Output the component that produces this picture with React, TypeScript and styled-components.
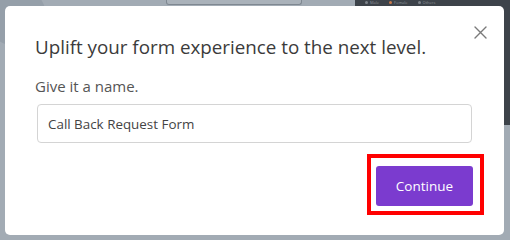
import React from "react";
import styled, { createGlobalStyle } from "styled-components";

const Global = createGlobalStyle`
  html, body { margin: 0; padding: 0; }
  body {
    width: 510px;
    height: 240px;
    overflow: hidden;
    font-family: "Open Sans", "Noto Sans", "Liberation Sans", sans-serif;
  }
  #root { width: 510px; height: 240px; }
`;

const Page = styled.div`
  position: relative;
  width: 510px;
  height: 240px;
  display: grid;
  grid-template-columns: 355px 1fr;
  background: #a2abb4;
  overflow: hidden;
`;

const LeftPane = styled.div`
  display: flex;
  flex-direction: column;
`;

const TopBar = styled.div`
  display: flex;
  align-items: flex-start;
  gap: 120px;
  height: 40px;
`;

const Avatar = styled.div`
  width: 60px;
  height: 60px;
  margin: -14px 0 0 -14px;
  border-radius: 50%;
  background: #959fa9;
`;

const GhostBox = styled.div`
  width: 134px;
  height: 4px;
  border: 1px solid #7f8891;
  border-top: none;
  border-radius: 0 0 3px 3px;
  background: #aab2ba;
`;

const RightPane = styled.div`
  display: flex;
  flex-direction: column;
`;

const DarkPanel = styled.div`
  height: 125px;
  background: #3d434a;
  display: flex;
  gap: 10px;
  padding: 0 0 0 10px;
  align-items: flex-start;
`;

const Legend = styled.span<{ $dot: string }>`
  font-size: 4px;
  color: #8b9097;
  display: flex;
  align-items: center;
  gap: 2px;
  &::before {
    content: "";
    width: 3px;
    height: 3px;
    border-radius: 50%;
    background: ${(p) => p.$dot};
  }
`;

const Modal = styled.div`
  position: absolute;
  left: 5px;
  top: 6px;
  width: 499px;
  box-sizing: border-box;
  padding: 27px 32px 20px 32px;
  background: #ffffff;
  border-radius: 5px;
  display: flex;
  flex-direction: column;
`;

const CloseButton = styled.button`
  position: absolute;
  top: 19px;
  right: 17px;
  width: 14px;
  height: 14px;
  padding: 0;
  border: none;
  background: transparent;
  display: flex;
  align-items: center;
  justify-content: center;
  cursor: pointer;
`;

const Title = styled.h2`
  margin: 0 0 0 -2px;
  font-size: 18.8px;
  line-height: 28px;
  font-weight: 400;
  color: #3b3b3b;
`;

const Label = styled.label`
  margin: 15px 0 0 -2px;
  font-size: 15px;
  line-height: 20px;
  color: #555555;
`;

const Input = styled.input`
  margin-top: 8px;
  height: 39px;
  box-sizing: border-box;
  padding: 0 10px;
  border: 1px solid #d4d4d4;
  border-radius: 4px;
  font-family: inherit;
  font-size: 13.4px;
  color: #444444;
  outline: none;
`;

const Footer = styled.div`
  margin-top: 11px;
  display: flex;
  justify-content: flex-end;
`;

const Highlight = styled.div`
  margin-right: -12px;
  border: 4px solid #ff0000;
  padding: 8px 7px 5px 5px;
  display: flex;
`;

const PrimaryButton = styled.button`
  width: 97px;
  height: 40px;
  border: none;
  border-radius: 3px;
  background: #7b3bcf;
  color: #ffffff;
  font-family: inherit;
  font-size: 13.5px;
  font-weight: 500;
  cursor: pointer;
`;

export default function App() {
  return (
    <>
      <Global />
      <Page>
        <LeftPane>
          <TopBar>
            <Avatar />
            <GhostBox />
          </TopBar>
        </LeftPane>
        <RightPane>
          <DarkPanel>
            <Legend $dot="#7d838a">Male</Legend>
            <Legend $dot="#c9784a">Female</Legend>
            <Legend $dot="#7d838a">Others</Legend>
          </DarkPanel>
        </RightPane>
        <Modal>
          <CloseButton aria-label="Close">
            <svg width="13" height="13" viewBox="0 0 13 13">
              <path d="M1 1L12 12M12 1L1 12" stroke="#7a7a7a" strokeWidth="1.4" strokeLinecap="round" />
            </svg>
          </CloseButton>
          <Title>Uplift your form experience to the next level.</Title>
          <Label>Give it a name.</Label>
          <Input defaultValue="Call Back Request Form" />
          <Footer>
            <Highlight>
              <PrimaryButton>Continue</PrimaryButton>
            </Highlight>
          </Footer>
        </Modal>
      </Page>
    </>
  );
}
